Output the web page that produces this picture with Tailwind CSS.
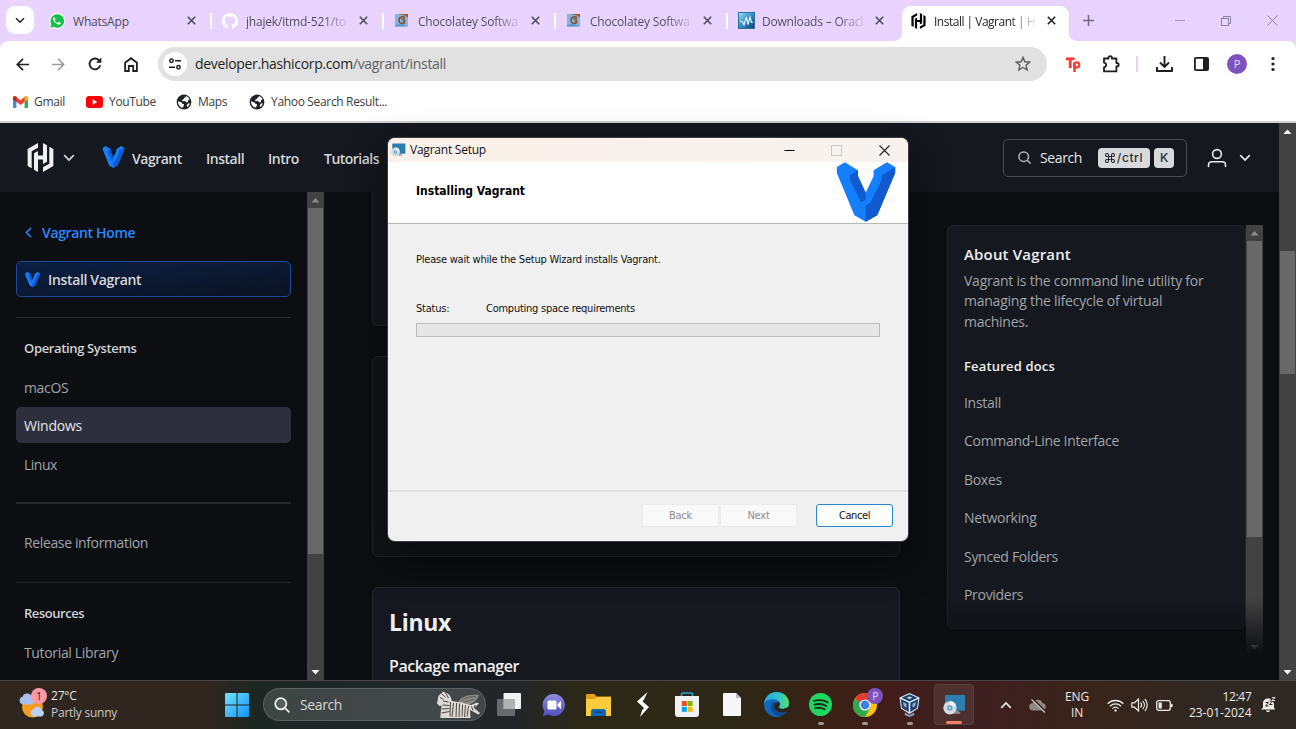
<!DOCTYPE html>
<html lang="en">
<head>
<meta charset="utf-8">
<title>Install | Vagrant | HashiCorp Developer</title>
<script src="https://cdn.jsdelivr.net/npm/@tailwindcss/browser@4"></script>
</head>
<body class="w-[1296px] h-[729px] overflow-hidden bg-[#0d0e12] relative font-['Open_Sans','Noto_Sans',sans-serif] flex flex-col text-[12px]">

<!-- shared symbols -->
<svg class="hidden">
  <symbol id="vagrant" viewBox="590 97 178 181">
    <path fill="#1480ff" d="M591 112 615 98 655 122V140L678 190 702 140V122L742 98 767 112V130L713 258 678 277 644 258 591 130Z"/>
    <path fill="#1159cf" d="M655 122 630 137V150L664 219 678 211V190L655 140ZM767 112 726 137V152L692 220 678 228V277L713 258 767 130Z"/>
  </symbol>
  <symbol id="hashicorp" viewBox="2.2 1 19.6 22">
    <path d="M10.114 1L2.25 5.525v12.95l3.061 1.763V7.29l4.803-2.765V1zM13.886 1v9.5h-3.772V7.05L7.053 8.813v12.42l3.061 1.767v-9.457h3.772v3.407l3.061-1.763V2.768L13.886 1zM13.886 23l7.864-4.525V5.525l-3.061-1.763v12.948l-4.803 2.765V23z"/>
  </symbol>
  <symbol id="close" viewBox="0 0 9 9"><path d="M.8.8l7.4 7.4M8.2.8L.8 8.2" stroke="currentColor" stroke-width="1.6"/></symbol>
  <symbol id="globe" viewBox="0 0 16 16">
    <circle cx="8" cy="8" r="7.4" fill="#202124"/>
    <path fill="#fff" d="M2 7.200l3.200 1.100 1.200 1.500 1.600.4-.3 1.700-1 1.800C3.800 13.200 1.900 10.600 2 7.200zM9.800 2.100c1.800.5 3.200 1.800 3.800 3.400l-1.300.6-.4 1.800-1.700.5-1-1.300-2.700.1-.5-1.300 1.900-1 .2-1.200 1.500-.3zM12.300 9.200l1.500.2c-.4 1.600-1.400 2.900-2.700 3.700l-.4-1.900z"/>
  </symbol>
  <symbol id="choco" viewBox="0 0 14 13">
    <rect x="0" y="0" width="13" height="12.500" fill="#7db7e6"/>
    <path d="M3 0h10v3.500L10 1.500z" fill="#a9501c"/>
    <path d="M10 3.500C7 1.800 3.500 3.500 4 6.800s3.800 3.400 5.500 1.800V7H7.800M6.500 5h3.300" fill="none" stroke="#8e4a22" stroke-width="1.500"/>
    <path d="M0 11l4-1 9 2.500H0z" fill="#559ad2"/>
  </symbol>
  <symbol id="installer" viewBox="0 0 24 21">
    <defs><linearGradient id="scr" x1="0" y1="0" x2="1" y2="1"><stop stop-color="#3fd6e0"/><stop offset="1" stop-color="#1377bd"/></linearGradient></defs>
    <rect x="2" y="0" width="21" height="16.500" rx=".8" fill="#2a7fae"/>
    <rect x="3" y="1" width="19" height="14.500" fill="url(#scr)"/>
    <path d="M12 16.500h4l1 2h-6z" fill="#8b9299"/><path d="M9 18.300h9v1.200H9z" fill="#a9b1b8"/>
    <circle cx="7.200" cy="13.500" r="7" fill="#d5dadd"/><path d="M7.200 6.500a7 7 0 0 1 6.600 4.700l-6.600 2.300z" fill="#f4f6f7"/>
    <circle cx="7.200" cy="13.500" r="2.800" fill="#4e9fdc"/><circle cx="7.200" cy="13.500" r="1.100" fill="#e8f3fa"/>
  </symbol>
  <symbol id="chev" viewBox="0 0 12 8"><path d="M1.200 1.200 6 6 10.800 1.200" fill="none" stroke="currentColor" stroke-width="1.700"/></symbol>
</svg>

<!-- tab strip -->
<div class="h-[41px] shrink-0 bg-[#e8d3ff] flex pl-[6px] text-[#4f4a57] tracking-[-0.2px]">
  <div class="w-7 h-7 mt-[6px] mr-[6px] rounded-[9px] bg-white flex items-center justify-center text-[#1f1f1f]"><svg class="w-[10px] h-[7px]"><use href="#chev"/></svg></div>

  <div class="w-[172px] h-[41px] flex items-center pl-[9px]">
    <svg class="w-4 h-4" viewBox="0 0 24 24"><path fill="#fff" d="M.5 23.700l1.700-6.200A11.800 11.800 0 1 1 6.600 22z"/><path fill="#16c04a" d="M2 22.200l1.500-5.200A10.200 10.200 0 1 1 7 20.700z"/><path fill="#fff" d="M8.400 6.500c-.4-.2-.8-.2-1.200.2-1 1-1.200 2.300-.6 3.800 1.300 3 3.500 5.300 6.600 6.500 1.800.7 3 .4 3.900-.6.5-.6.6-1.300.3-1.600l-2.400-1.200c-.4-.1-.6 0-.8.2l-.9 1.100c-.2.200-.4.2-.7.1-1.700-.8-2.900-1.900-3.800-3.500-.1-.2-.1-.4.1-.6l.7-.9c.1-.2.1-.4 0-.7z"/></svg>
    <span class="ml-2 w-[102px] mt-[2px]">WhatsApp</span>
    <svg class="w-[9px] h-[9px] ml-3"><use href="#close"/></svg>
    <i class="w-[2px] h-4 bg-white ml-[14px]"></i>
  </div>
  <div class="w-[172px] h-[41px] flex items-center pl-[10px]">
    <svg class="w-4 h-4" viewBox="0 0 16 16"><path fill="#fff" d="M8 0C3.580 0 0 3.580 0 8c0 3.540 2.290 6.530 5.470 7.590.4.070.55-.17.55-.38 0-.19-.01-.82-.01-1.490-2.010.37-2.530-.49-2.690-.94-.09-.23-.48-.94-.82-1.130-.28-.15-.68-.52-.01-.53.63-.01 1.080.58 1.230.82.72 1.210 1.870.87 2.330.66.070-.52.280-.87.510-1.070-1.780-.2-3.640-.89-3.640-3.950 0-.87.310-1.590.82-2.150-.08-.2-.36-1.020.08-2.120 0 0 .67-.21 2.200.82.640-.18 1.320-.27 2-.27s1.360.09 2 .27c1.530-1.040 2.200-.82 2.200-.82.440 1.100.16 1.920.08 2.120.51.560.82 1.270.82 2.150 0 3.070-1.870 3.750-3.650 3.950.29.25.54.73.54 1.480 0 1.070-.01 1.930-.01 2.200 0 .21.15.46.55.38A8.010 8.010 0 0 0 16 8c0-4.420-3.580-8-8-8z"/></svg>
    <span class="ml-2 w-[102px] mt-[2px] overflow-hidden whitespace-nowrap bg-linear-to-r from-[#4f4a57] from-75% to-[#4f4a57]/10 bg-clip-text text-transparent">jhajek/itmd-521/to</span>
    <svg class="w-[9px] h-[9px] ml-[11px]"><use href="#close"/></svg>
    <i class="w-[2px] h-4 bg-white ml-[14px]"></i>
  </div>
  <div class="w-[172px] h-[41px] flex items-center pl-[11px]">
    <svg class="w-[14px] h-[13px]"><use href="#choco"/></svg>
    <span class="ml-[9px] w-[102px] mt-[2px] overflow-hidden whitespace-nowrap bg-linear-to-r from-[#4f4a57] from-75% to-[#4f4a57]/10 bg-clip-text text-transparent">Chocolatey Softwa</span>
    <svg class="w-[9px] h-[9px] ml-[11px]"><use href="#close"/></svg>
    <i class="w-[2px] h-4 bg-white ml-[14px]"></i>
  </div>
  <div class="w-[172px] h-[41px] flex items-center pl-[11px]">
    <svg class="w-[14px] h-[13px]"><use href="#choco"/></svg>
    <span class="ml-[9px] w-[102px] mt-[2px] overflow-hidden whitespace-nowrap bg-linear-to-r from-[#4f4a57] from-75% to-[#4f4a57]/10 bg-clip-text text-transparent">Chocolatey Softwa</span>
    <svg class="w-[9px] h-[9px] ml-[11px]"><use href="#close"/></svg>
    <i class="w-[2px] h-4 bg-white ml-[14px]"></i>
  </div>
  <div class="w-[172px] h-[41px] flex items-center pl-[10px]">
    <svg class="w-[17px] h-[17px]" viewBox="0 0 17 17"><defs><linearGradient id="ac" x1="0" y1="0" x2="1" y2="1"><stop stop-color="#9be0f4"/><stop offset=".5" stop-color="#2f8fc4"/><stop offset="1" stop-color="#1a3a7a"/></linearGradient></defs><rect width="17" height="17" fill="#2a72a8"/><rect x="1" y="1" width="15" height="15" fill="url(#ac)"/><path d="M2 9.500h2.500L6 13l2.500-8L10 12.500 12 5l1.500 5.500H15" fill="none" stroke="#e9fbff" stroke-width="1.100"/></svg>
    <span class="ml-[7px] w-[102px] mt-[2px] overflow-hidden whitespace-nowrap bg-linear-to-r from-[#4f4a57] from-75% to-[#4f4a57]/10 bg-clip-text text-transparent">Downloads – Oracl</span>
    <svg class="w-[9px] h-[9px] ml-[11px]"><use href="#close"/></svg>
  </div>
  <div class="relative ml-[2px] mt-[6px] w-[167px] h-[35px] rounded-t-[9px] bg-white flex items-center pl-[9px] pb-[6px] text-[#1f1f1f]">
    <svg class="absolute -left-2 bottom-0 w-2 h-2" viewBox="0 0 8 8"><path fill="#fff" d="M8 0v8H0a8 8 0 0 0 8-8z"/></svg>
    <svg class="absolute -right-2 bottom-0 w-2 h-2" viewBox="0 0 8 8"><path fill="#fff" d="M0 0v8h8a8 8 0 0 1-8-8z"/></svg>
    <svg class="w-[15px] h-4"><use href="#hashicorp"/></svg>
    <span class="ml-2 w-[101px] mt-[2px] tracking-[-0.5px] overflow-hidden whitespace-nowrap bg-linear-to-r from-[#1f1f1f] from-75% to-[#1f1f1f]/10 bg-clip-text text-transparent">Install | Vagrant | H</span>
    <svg class="w-[9px] h-[9px] ml-3"><use href="#close"/></svg>
  </div>
  <div class="flex items-center h-[41px] text-[#8d8299]">
    <svg class="w-[11px] h-[11px] ml-[14px]" viewBox="0 0 11 11"><path d="M5.500 0v11M0 5.500h11" stroke="#75697f" stroke-width="1.500"/></svg>
    <svg class="w-[10px] h-[11px] ml-[81px]" viewBox="0 0 10 11"><path d="M0 5.500h10" stroke="#a497b3"/></svg>
    <svg class="w-[10px] h-[10px] ml-[36px]" viewBox="0 0 10 10" fill="none" stroke="#8d8299"><rect x=".5" y="2.500" width="7" height="7"/><path d="M2.500 2.500V.5H9.500v7H7.500"/></svg>
    <svg class="w-[11px] h-[11px] ml-[36px]" viewBox="0 0 11 11"><path d="M.5.5l10 10M10.500.5l-10 10" stroke="#8d8299"/></svg>
  </div>
</div>

<!-- toolbar -->
<div class="bg-[#e8d3ff] shrink-0">
<div class="h-[46px] bg-white rounded-t-[8px] flex items-center text-[#1f1f1f]">
  <svg class="w-[13px] h-[13px] ml-4" viewBox="0 0 13 13"><path d="M7 .8L1.300 6.500 7 12.200M1.300 6.500H13" fill="none" stroke="#1f1f1f" stroke-width="1.700"/></svg>
  <svg class="w-[13px] h-[13px] ml-[23px]" viewBox="0 0 13 13"><path d="M6 .8l5.700 5.700L6 12.200M11.700 6.500H0" fill="none" stroke="#9b9b9b" stroke-width="1.600"/></svg>
  <svg class="w-[14px] h-[14px] ml-[23px]" viewBox="0 0 14 14"><path d="M12.200 8.300A5.400 5.400 0 1 1 11 3.300L12.600 5" fill="none" stroke="#1f1f1f" stroke-width="1.800"/><path d="M13.300.6v5.200H8z" fill="#1f1f1f"/></svg>
  <svg class="w-[14px] h-[15px] ml-[22px]" viewBox="0 0 14 15"><path d="M1.100 5.700 7 1.200l5.900 4.500v8.300H9.200V9H4.800v5H1.100z" fill="none" stroke="#1f1f1f" stroke-width="1.800"/></svg>
  <div class="ml-[20px] w-[889px] h-[34px] rounded-full bg-[#e1e1e1] flex items-center pl-[5px] pr-[16px]">
    <span class="w-6 h-6 rounded-full bg-white flex items-center justify-center"><svg class="w-3 h-3" viewBox="0 0 12 12" fill="none" stroke="#1f1f1f" stroke-width="1.500"><circle cx="2.500" cy="2.800" r="1.700"/><path d="M6 2.800h6M0 9.200h6"/><circle cx="9.500" cy="9.200" r="1.700"/></svg></span>
    <span class="ml-2 text-[14px] tracking-[-0.33px] text-[#5f6063] pb-px"><span class="text-[#1f1f1f]">developer.hashicorp.com</span>/vagrant/install</span>
    <svg class="w-4 h-4 ml-auto" viewBox="0 0 16 16"><path d="M8 1.400l1.900 4.400 4.800.4-3.600 3.100 1.100 4.700L8 11.500 3.800 14l1.100-4.700L1.300 6.200l4.800-.4z" fill="none" stroke="#5a5c60" stroke-width="1.400"/></svg>
  </div>
  <svg class="w-[15px] h-[15px] ml-[19px]" viewBox="0 0 15 15" fill="none" stroke="#fb3b33"><path d="M0 1.800h8.500" stroke-width="2.800"/><path d="M4.200 1.500v9.500" stroke-width="2.900"/><path d="M8.500 5.500V15" stroke-width="2.600"/><circle cx="10.700" cy="7.900" r="2.500" stroke-width="2.300"/></svg>
  <svg class="w-[18px] h-[18px] ml-[21px]" viewBox="0 0 18 18"><path d="M2 3.500h4.500V2.800a1.700 1.700 0 0 1 3.400 0v.7H14.400V8h.6a1.700 1.700 0 0 1 0 3.400h-.6v5H2v-4.100c2.800-.6 2.800-4 0-4.600z" fill="none" stroke="#1f1f1f" stroke-width="1.800" stroke-linejoin="round"/></svg>
  <i class="w-[2px] h-4 ml-[16px] bg-[#e8d3ff]"></i>
  <svg class="w-[17px] h-[16px] ml-[18px]" viewBox="0 0 17 16"><path d="M8.500 0v10.500M4 6.500l4.500 4.500L13 6.500M1 11v4h15v-4" fill="none" stroke="#1f1f1f" stroke-width="1.900"/></svg>
  <svg class="w-[15px] h-[14px] ml-[21px]" viewBox="0 0 15 14"><rect x=".9" y=".9" width="13.200" height="12.200" rx="1" fill="none" stroke="#1f1f1f" stroke-width="1.800"/><path d="M9 1h5v12H9z" fill="#1f1f1f"/></svg>
  <span class="w-5 h-5 ml-[18px] rounded-full bg-[#7c52bf] text-[#e9def7] text-[11px] leading-5 text-center">P</span>
  <svg class="w-[4px] h-4 ml-[24px]" viewBox="0 0 4 16" fill="#1f1f1f"><circle cx="2" cy="2.500" r="1.600"/><circle cx="2" cy="8" r="1.600"/><circle cx="2" cy="13.500" r="1.600"/></svg>
</div>
</div>

<!-- bookmarks -->
<div class="h-[36px] shrink-0 bg-white border-b-2 border-[#cfd0d2] flex items-center pb-[5px] text-[#3c3d40] tracking-[-0.33px]">
  <svg class="w-[15px] h-[12px] ml-[13px]" viewBox="0 0 15 12"><path fill="#4285f4" d="M0 2.500l3.400 2V12H1a1 1 0 0 1-1-1z"/><path fill="#34a853" d="M15 2.500l-3.400 2V12H14a1 1 0 0 0 1-1z"/><path fill="#ea4335" d="M0 1.800C0 .3 1.800-.2 3 .6l4.500 3.600L12 .6c1.200-.8 3-.3 3 1.200v1.400L7.500 9 0 3.200z"/><path fill="#fbbc04" d="M11.600 1l.5-.4c1.200-.8 2.900-.3 2.900 1.200v1.600l-3.400 2.400z"/><path fill="#c5221f" d="M0 1.800C0 .3 1.800-.2 3 .6l.4.4v4.800L0 3.200z"/></svg>
  <span class="ml-[6px] w-[31px]">Gmail</span>
  <svg class="w-[17px] h-[12px] ml-[21px]" viewBox="0 0 17 12"><rect width="17" height="12" rx="3" fill="#f00"/><path d="M6.700 3.300v5.400L11.300 6z" fill="#fff"/></svg>
  <span class="ml-[6px] w-[47px]">YouTube</span>
  <svg class="w-4 h-4 ml-5"><use href="#globe"/></svg>
  <span class="ml-[6px] w-[30px]">Maps</span>
  <svg class="w-4 h-4 ml-[21px]"><use href="#globe"/></svg>
  <span class="ml-[6px] whitespace-nowrap">Yahoo Search Result...</span>
</div>

<!-- page viewport -->
<div class="h-[557px] shrink-0 flex">
  <div class="w-[1279px] flex flex-col">
    <header class="h-[69px] shrink-0 bg-[#15181e] flex items-center text-[14px] font-semibold tracking-[-0.48px] text-[#d5d7db]">
      <svg class="w-[27px] h-[29px] ml-[27px] text-[#f0f0f2] fill-current"><use href="#hashicorp"/></svg>
      <svg class="w-[12px] h-[8px] ml-[9px]"><use href="#chev"/></svg>
      <svg class="w-[23px] h-[22px] ml-[27px] mb-[2px]"><use href="#vagrant"/></svg>
      <span class="ml-[7px] w-[74px] pt-px">Vagrant</span>
      <span class="w-[62px] pt-px">Install</span>
      <span class="w-[56px] pt-px">Intro</span>
      <span class="tracking-[-0.52px] pt-px">Tutorials</span>
      <div class="ml-auto w-[184px] h-[38px] border border-[#4a4d57] rounded-[5px] flex items-center pl-[14px] font-normal">
        <svg class="w-[13px] h-[13px]" viewBox="0 0 13 13" fill="none" stroke="#b2b6bd" stroke-width="1.500"><circle cx="5.700" cy="5.700" r="4.800"/><path d="M9.300 9.300l3.300 3.300"/></svg>
        <span class="ml-[9px] w-[58px] tracking-[-0.39px] text-[#e4e6ea]">Search</span>
        <span class="w-[52px] h-5 rounded-[4px] bg-[#d8d9dd] text-[#2b2d33] font-['Inter'] font-medium text-[12px] tracking-[0.6px] flex items-center justify-center gap-[2px]">
          <svg class="w-[10px] h-[10px]" viewBox="0 0 10 10" fill="none" stroke="#2b2d33" stroke-width="1.100"><path d="M3.500 3.500h3v3h-3zM3.500 3.500H2A1.500 1.500 0 1 1 3.500 2zM6.500 3.500V2A1.500 1.500 0 1 1 8 3.500zM6.500 6.500H8A1.500 1.500 0 1 1 6.500 8zM3.500 6.500V8A1.500 1.500 0 1 1 2 6.500z"/></svg>/ctrl</span>
        <span class="ml-1 w-5 h-5 rounded-[4px] bg-[#d8d9dd] text-[#2b2d33] font-['Inter'] font-medium text-[12px] tracking-normal leading-5 text-center">K</span>
      </div>
      <svg class="w-[20px] h-[20px] ml-[20px]" viewBox="0 0 20 20" fill="none" stroke="#e8e9ec" stroke-width="1.600" stroke-linecap="round"><circle cx="10" cy="6" r="4.400"/><path d="M1.500 18.500v-1.500c0-2 1.500-3.300 3.300-3.300h10.400c1.800 0 3.300 1.300 3.300 3.300v1.500"/></svg>
      <svg class="w-[12px] h-[8px] ml-[12px] mr-[28px] text-[#e8e9ec]"><use href="#chev"/></svg>
    </header>

    <div class="h-[488px] flex overflow-hidden text-[14px] text-[#a0a4ab] tracking-[-0.34px]">
      <nav class="w-[307px] pl-4 pr-4 flex flex-col whitespace-nowrap">
        <a class="mt-[30px] h-5 pl-[9px] flex items-center font-semibold text-[#2b89ff]"><svg class="w-[7px] h-[11px] mr-[10px]" viewBox="0 0 7 11"><path d="M6 1L1.300 5.500 6 10" fill="none" stroke="#2b89ff" stroke-width="1.500"/></svg>Vagrant Home</a>
        <a class="mt-[19px] h-9 pl-2 flex items-center rounded-[5px] border border-[#1c4a99] bg-linear-to-br from-[#0a1f44] to-[#0c1322] font-semibold text-[#d5d7db]"><svg class="w-[15px] h-[15px] mr-[8px]"><use href="#vagrant"/></svg>Install Vagrant</a>
        <i class="mt-[20px] h-px shrink-0 bg-[#2b2d32]"></i>
        <b class="mt-[20px] h-5 pl-2 text-[13px] leading-5 font-semibold text-[#d0d2d6] tracking-[-0.35px]">Operating Systems</b>
        <a class="mt-3 h-9 pl-2 leading-9">macOS</a>
        <a class="mt-px h-9 pl-2 leading-[38px] rounded-[5px] bg-[#2d303c] font-medium text-[#e4e5e9] tracking-[-0.22px]">Windows</a>
        <a class="mt-[3px] h-9 pl-2 leading-[38px] tracking-[-0.5px]">Linux</a>
        <i class="mt-[20px] h-[2px] shrink-0 bg-[#26282d]"></i>
        <a class="mt-[21px] h-9 pl-2 leading-9 tracking-[-0.37px]">Release information</a>
        <i class="mt-[21px] h-px shrink-0 bg-[#222429]"></i>
        <b class="mt-[20px] h-5 pl-2 text-[13px] leading-5 font-semibold text-[#d0d2d6] tracking-[-0.45px]">Resources</b>
        <a class="mt-3 h-9 pl-2 leading-9">Tutorial Library</a>
      </nav>
      <div class="w-[17px] bg-[#424242] flex flex-col items-center">
        <svg class="w-[9px] h-[16px]" viewBox="0 0 9 16"><path d="M4.500 6L8.500 10.500h-8z" fill="#8b8b8b"/></svg>
        <i class="w-[15px] h-[346px] bg-[#686868]"></i>
        <svg class="w-[9px] h-[16px] mt-auto" viewBox="0 0 9 16"><path d="M4.500 10.500L.5 6h8z" fill="#fff"/></svg>
      </div>
      <main class="ml-[48px] w-[528px] flex flex-col text-[#efeff1]">
        <section class="h-[134px] shrink-0 border border-t-0 border-[#24262c] rounded-b-[6px] bg-[#15181e]"></section>
        <section class="mt-[30px] h-[201px] shrink-0 border border-[#24262c] rounded-[6px] bg-[#13151a]"></section>
        <section class="mt-[30px] h-[110px] shrink-0 border border-[#24262c] rounded-[6px] bg-[#15181e] pl-4">
          <h2 class="mt-[18px] text-[23px] leading-[32px] font-bold tracking-[-0.3px]">Linux</h2>
          <h3 class="mt-[18px] text-[16px] leading-5 font-semibold tracking-[-0.45px]">Package manager</h3>
        </section>
      </main>
      <aside class="relative ml-[47px] mt-[33px] h-[430px] flex">
        <div class="w-[299px] h-[404px] border border-[#24262c] rounded-[6px] bg-[#15181e] pl-4 pt-[19px] flex flex-col">
          <b class="h-5 text-[15px] leading-5 font-semibold text-[#efeff1] tracking-[0.17px] -mt-px mb-px">About Vagrant</b>
          <p class="mt-[6px] w-[260px] leading-[20.300px] tracking-[-0.24px]">Vagrant is the command line utility for<br>managing the lifecycle of virtual<br>machines.</p>
          <b class="mt-6 h-5 text-[13px] leading-5 font-semibold text-[#efeff1] tracking-[0.17px]">Featured docs</b>
          <div class="mt-2 flex flex-col leading-[38.400px] tracking-[-0.3px]">
            <a>Install</a><a>Command-Line Interface</a><a>Boxes</a><a>Networking</a><a>Synced Folders</a><a>Providers</a>
          </div>
        </div>
        <div class="w-[17px] bg-[#424242] flex flex-col items-center">
          <svg class="w-[9px] h-[16px] shrink-0" viewBox="0 0 9 16"><path d="M4.500 6L8.500 10.500h-8z" fill="#8b8b8b"/></svg>
          <i class="w-[15px] h-[296px] bg-[#686868]"></i>
          <svg class="w-[9px] h-[16px] mt-auto" viewBox="0 0 9 16"><path d="M4.500 10.500L.5 6h8z" fill="#fff"/></svg>
        </div>
        <div class="absolute inset-x-0 bottom-0 h-[58px] bg-linear-to-b from-[#0d0e12]/0 to-[#0d0e12]"></div>
      </aside>
    </div>
  </div>
  <div class="w-[17px] bg-[#424242] flex flex-col items-center">
    <svg class="w-[9px] h-[16px]" viewBox="0 0 9 16"><path d="M4.500 6.500L8.500 11h-8z" fill="#fff"/></svg>
    <i class="mt-[112px] w-[15px] h-[123px] bg-[#686868]"></i>
    <svg class="w-[9px] h-[16px] mt-auto" viewBox="0 0 9 16"><path d="M4.500 10.500L.5 6h8z" fill="#fff"/></svg>
  </div>
</div>

<!-- setup wizard window -->
<div class="absolute left-[388px] top-[138px] w-[520px] h-[403px] rounded-[7px] overflow-hidden bg-[#f0f0f0] shadow-[0_0_0_1px_#3b3d40,0_16px_36px_6px_rgba(0,0,0,0.45)] flex flex-col font-['DejaVu_Sans_Condensed','Open_Sans',sans-serif] text-[11px] tracking-[-0.22px] text-[#111]">
  <div class="h-6 shrink-0 bg-linear-to-r from-[#fbf0ea] to-[#f7f2ee] flex items-center pl-[3px] font-['Open_Sans'] text-[12px] tracking-[-0.23px]">
    <svg class="w-[15px] h-[14px]"><use href="#installer"/></svg>
    <span class="ml-[4px]">Vagrant Setup</span>
    <svg class="w-[11px] h-[11px] ml-auto" viewBox="0 0 11 11"><path d="M.5 5.500h10" stroke="#000"/></svg>
    <svg class="w-[11px] h-[11px] ml-[36px]" viewBox="0 0 11 11"><rect x=".5" y=".5" width="10" height="10" fill="none" stroke="#cfc9c4"/></svg>
    <svg class="w-[11px] h-[11px] ml-[37px] mr-[18px]" viewBox="0 0 11 11"><path d="M.5.5l10 10M10.500.5l-10 10" stroke="#222" stroke-width="1.100"/></svg>
  </div>
  <div class="h-[62px] shrink-0 bg-white border-b border-[#b9b9b9] flex justify-between pl-7 pr-[12px]">
    <b class="mt-[19px] text-[12px] leading-5 tracking-[0px] text-black">Installing Vagrant</b>
    <svg class="w-[60px] h-[60px]"><use href="#vagrant"/></svg>
  </div>
  <div class="h-[268px] shrink-0 px-7 border-b-2 border-[#dfdfdf]">
    <p class="mt-[26px] leading-5">Please wait while the Setup Wizard installs Vagrant.</p>
    <p class="mt-[29px] leading-5 flex"><span class="w-[70px]">Status:</span><span class="tracking-[-0.25px]">Computing space requirements</span></p>
    <div class="mt-[4px] h-[14px] border border-[#bcbcbc] bg-[#e6e6e6]"></div>
  </div>
  <div class="flex justify-end pt-3 pr-[15px] leading-[21px] text-center text-[#8f8f8f]">
    <span class="w-[77px] h-[23px] border border-[#ebebeb] rounded-[2px] bg-[#f9f9f9]">Back</span>
    <span class="ml-[1px] w-[77px] h-[23px] border border-[#ebebeb] rounded-[2px] bg-[#f9f9f9]">Next</span>
    <span class="ml-[19px] w-[77px] h-[23px] border border-[#2a86cf] rounded-[3px] bg-[#fdfdfd] text-[#111] tracking-[-0.4px]">Cancel</span>
  </div>
</div>

<!-- taskbar -->
<div class="h-[49px] shrink-0 border-t border-[#4a4846] bg-linear-[90deg,#2f2620_0%,#2e261f_16%,#1c2622_20%,#22272b_34%,#232628_40%,#2c2818_45%,#2d2716_57%,#3a2115_64%,#401d19_68%,#3e1f20_76%,#38241a_84%,#302721_92%,#2d2824_100%] flex items-center text-[#ece9e6]">
  <div class="relative w-[27px] h-[28px] ml-[18px] mb-[3px]">
    <svg class="w-[27px] h-[28px]" viewBox="0 0 27 28"><circle cx="14.500" cy="17" r="10.500" fill="#f79a1d"/><path d="M5 14.500a4 4 0 0 1-.5-7.800 5 5 0 0 1 9.400.3c3 .4 3.600 6 .1 7.500z" fill="#a9bfee"/><path d="M15.500 26.500a3.600 3.600 0 0 1-.4-7 4.600 4.600 0 0 1 8.600.6c3 .6 3 5.800-.2 6.400z" fill="#bcd3f8"/></svg>
    <span class="absolute left-[13px] -top-[2px] w-4 h-4 rounded-full bg-[#ff98a4] text-[#3a2024] text-[10.500px] leading-4 text-center">1</span>
  </div>
  <div class="ml-[6px] w-[174px] leading-[17px] tracking-[-0.2px] -mt-[2px]">27°C<br><span class="text-[#cdc8c4] tracking-[-0.25px]">Partly sunny</span></div>
  <svg class="w-6 h-6" viewBox="0 0 24 24"><defs><linearGradient id="win" x1="0" y1="0" x2="1" y2="1"><stop stop-color="#74e3fb"/><stop offset="1" stop-color="#0f93f8"/></linearGradient></defs><path fill="url(#win)" d="M1 0h10.500v11.500H0V1a1 1 0 0 1 1-1zM12.500 0H23a1 1 0 0 1 1 1v10.500H12.500zM0 12.500h11.500V24H1a1 1 0 0 1-1-1zM12.500 12.500H24V23a1 1 0 0 1-1 1H12.500z"/></svg>
  <div class="ml-[14px] mb-px w-[223px] h-[33px] rounded-full bg-white/15 border border-white/15 flex items-center pl-[10px] pr-[4px] text-[14px] tracking-[-0.39px] text-[#d6d6d4]">
    <svg class="w-[16px] h-[16px]" viewBox="0 0 16 16" fill="none" stroke="#eee" stroke-width="1.800"><circle cx="6.800" cy="6.800" r="5.600" fill="#ffffff22"/><path d="M10.800 10.800l4.500 4.500"/></svg>
    <span class="ml-[10px]">Search</span>
    <svg class="w-[44px] h-[27px] ml-auto" viewBox="0 0 44 27">
      <path d="M21 12C23 6 30 3 42 4c-2 6-7 10-15 10z" fill="#8d8a85"/><path d="M24 10c4-3.500 9-4.500 15-4.500M26 12c4-2 7-3 11-3.500" stroke="#5b5854" stroke-width=".9" fill="none"/>
      <path d="M1 7.500C1 5 3 2.500 5 2.500L5.500.5 8 1.500c4 .8 6 4 7 8.500 4 1 8 .5 13 2.500l6 1.500 6-2.500 2 1-5 4.500 6 5-1.500 1.500-8.500-4.500.5 8H3.500c-.5-4 1-8 1-12.500L2.500 15 0 12.500z" fill="#dedbd6"/>
      <path d="M5 3l3.500 3.500M8.500 2l3 5M3 6.500l3.500 2M6 10l5.500 1M5.500 14l7 .5M5 18l7.500-.5M4.500 22l8-1.500M13.500 11l-.5 14.500M16.500 12l-1.500 14M19.500 12l-.5 14M22.500 12.500l-.5 13.500M25.500 13.500l-.5 12M28.500 14l-1 12M31.500 15l-1.500 10.500M34.500 15.500l1.500 4M38 14l-1 3" stroke="#4c4844" stroke-width="1" fill="none"/>
    </svg>
  </div>
  <div class="ml-[1px] mr-[1px] mb-px grid grid-cols-11 w-[489.500px] h-full items-center justify-items-center">
    <svg class="w-6 h-[23px]" viewBox="0 0 24 23"><rect x="6.500" y="0" width="17.500" height="16" rx="1" fill="#f1f1f1"/><rect x="0" y="6" width="18" height="17" rx="1" fill="#777a7c" fill-opacity=".82"/><path d="M6.500 6H18v10H6.500z" fill="#b1b2b4"/></svg>
    <svg class="w-6 h-6" viewBox="0 0 24 24"><defs><linearGradient id="chat" x1="0" y1="0" x2="0" y2="1"><stop stop-color="#8e8ed8"/><stop offset="1" stop-color="#5350c0"/></linearGradient></defs><path d="M12 1a11 11 0 1 1-5.500 20.600L1 23l1.400-5A11 11 0 0 1 12 1z" fill="url(#chat)"/><rect x="5.500" y="7.500" width="9" height="9" rx="1.500" fill="#fff"/><path d="M15.500 11l3.500-3v8l-3.500-3z" fill="#fff"/></svg>
    <svg class="w-[25px] h-[22px]" viewBox="0 0 25 22"><path d="M0 1a1 1 0 0 1 1-1h7.500l2 2.500H25V6H0z" fill="#e2a10e"/><path d="M0 5h9l2-2h14v19H0z" fill="#fccb3e"/><path d="M5 22v-4.500a2.500 2.500 0 0 1 2.500-2.500h10a2.500 2.500 0 0 1 2.500 2.500V22z" fill="#1069b5"/><path d="M8.500 18.200h8" stroke="#0b3f76" stroke-width="1.200"/></svg>
    <svg class="w-3 h-[25px]" viewBox="0 0 12 25"><path d="M10.500 0L7 7.500l-1.500 2L12 15 3 25l2-6.500L7 16 0 9.500z" fill="#fff"/></svg>
    <svg class="w-6 h-[25px]" viewBox="0 0 24 25"><path d="M6.500 5V2.200A1.200 1.200 0 0 1 7.700 1h8.600a1.200 1.200 0 0 1 1.200 1.200V5" fill="none" stroke="#2ba3dd" stroke-width="1.600"/><path d="M0 4h24v18a3 3 0 0 1-3 3H3a3 3 0 0 1-3-3z" fill="#f1f1f1"/><path d="M6.800 9h5v5h-5z" fill="#f25022"/><path d="M12.600 9h5v5h-5z" fill="#7fba00"/><path d="M6.800 14.800h5v5h-5z" fill="#00a4ef"/><path d="M12.600 14.800h5v5h-5z" fill="#ffb900"/></svg>
    <svg class="w-[18px] h-[23px]" viewBox="0 0 18 23"><path d="M0 1a1 1 0 0 1 1-1h12l5 5v17a1 1 0 0 1-1 1H1a1 1 0 0 1-1-1z" fill="#f7f7f7"/><path d="M13 0v5h5z" fill="#b9b9b9"/></svg>
    <svg class="w-[25px] h-[25px]" viewBox="0 0 24 24"><defs><linearGradient id="e1" x1="0" y1="0" x2="1" y2="0"><stop stop-color="#2aa5e0"/><stop offset=".6" stop-color="#2fc4c8"/><stop offset="1" stop-color="#5fdc5a"/></linearGradient></defs><circle cx="12" cy="12" r="12" fill="#1368bd"/><path d="M0 11.500C.5 5 5.500 0 12 0c7 0 12 5 12 10.500 0 3.500-2.500 5.700-5.700 5.700-2.300 0-4-.8-4-1.900 0-.7 1-1.200 1-2.700C15.300 9 12.500 7 9 7 4.500 7 1 9 0 11.500z" fill="url(#e1)"/><path d="M9 9.500c-4 3-3 10.500 3.500 13.200 4 1 8-1 9.800-4.200-5 2.500-12.500 1-12.500-5 0-1.500.8-3 2.200-3.800z" fill="#0a4a94"/><path d="M9.800 13.500c0 5.500 7 7.500 12 5.200.8-.3 1-.1.6.5L24 20v-5.500l-5.700 1.700c-2.300 0-4-.8-4-1.900 0-.7 1-1.200 1-2.700 0-1-.6-1.800-1.500-2-2.500.2-4 2-4 3.900z" fill="#2e2315"/></svg>
    <div class="relative h-full flex items-center"><svg class="w-[23px] h-[23px]" viewBox="0 0 24 24"><circle cx="12" cy="12" r="12" fill="#1ed760"/><path d="M5 8.300c5-1.400 10.500-1 14.500 1.400M5.700 12.200c4.200-1.200 8.800-.8 12.300 1.300M6.400 15.900c3.500-.9 7-.6 10 1.100" fill="none" stroke="#182a18" stroke-width="1.900" stroke-linecap="round"/></svg><i class="absolute left-[9px] bottom-[4px] w-[6px] h-[3px] rounded-full bg-[#a09793]"></i></div>
    <div class="relative h-full flex items-center"><svg class="w-[24px] h-[24px]" viewBox="0 0 24 24"><circle cx="12" cy="12" r="12" fill="#fbc116"/><path d="M12 12L1.600 6A12 12 0 0 1 22.400 6z" fill="#e33b2e"/><path d="M1.600 6A12 12 0 0 0 12 24l5.200-9L12 12z" fill="#2da94f"/><path d="M12 6.500h10.700L22.400 6 12 0z" fill="#e33b2e"/><circle cx="12" cy="12" r="5.600" fill="#fff"/><circle cx="12" cy="12" r="4.400" fill="#3b7de9"/></svg><span class="absolute left-[14px] top-[7px] w-4 h-4 rounded-full bg-[#7c52bf] text-[#e3d6f5] text-[10px] leading-4 text-center">P</span><i class="absolute left-[9px] bottom-[4px] w-[6px] h-[3px] rounded-full bg-[#a09793]"></i></div>
    <div class="relative h-full flex items-center"><svg class="w-[21px] h-[24px]" viewBox="0 0 21 24"><path d="M10.500 0L20.500 4.500 19 15.500 10.500 21 2 15.500.5 4.500z" fill="#dbe7f2"/><path d="M10.500 1.200L18.500 4.700l-8 3.700-8-3.700zM1.700 6l8 3.700v9.400L3 14.900zM19.300 6l-8 3.700v9.400l6.700-4.200z" fill="#1d3f6b"/><path d="M4 9l3.500 1.800v4L4.800 13zM17 9l-3.500 1.800v4l2.700-1.800z" fill="#8fb0d3"/><path d="M6 19.500l4.500 2.500 4.500-2.500.5 2.500-5 2-5-2z" fill="#7f9cc0"/><path d="M7.500 4.800l3-1.300 3 1.300-3 1.300z" fill="#cfe0ef"/></svg><i class="absolute left-[8px] bottom-[4px] w-[6px] h-[3px] rounded-full bg-[#a09793]"></i></div>
    <div class="relative w-10 h-[41px] rounded-[4px] bg-white/8 border border-white/8 flex items-center justify-center"><svg class="w-[23px] h-[20px]"><use href="#installer"/></svg><i class="absolute left-[11px] bottom-0 w-4 h-[3px] rounded-full bg-[#f4806a]"></i></div>
  </div>
  <svg class="w-[12px] h-[8px] ml-[22px] rotate-180"><use href="#chev"/></svg>
  <svg class="w-[18px] h-[15px] ml-[17px]" viewBox="0 0 18 15"><path d="M4 12.500a3.600 3.600 0 0 1-.3-7.200 5.200 5.200 0 0 1 9.700-.4 3.900 3.900 0 0 1 .6 7.600z" fill="#8f8883"/><path d="M3 1l13.500 13" stroke="#2a1d15" stroke-width="2.500"/><path d="M2.500 1.500L16 14.500" stroke="#d8d4d0" stroke-width="1.100"/></svg>
  <div class="ml-[17px] w-[27px] text-center leading-[16px] tracking-[-0.15px]">ENG<br>IN</div>
  <svg class="w-[17px] h-[13px] ml-[16px]" viewBox="0 0 17 13" fill="none" stroke="#ece9e6" stroke-width="1.300"><path d="M.6 4.700c4.400-4.300 11.400-4.300 15.800 0M3 7.200c3.100-3 7.900-3 11 0M5.400 9.600c1.800-1.700 4.400-1.700 6.200 0"/><circle cx="8.500" cy="11.500" r=".9" fill="#ece9e6" stroke-width=".6"/></svg>
  <svg class="w-[17px] h-[14px] ml-[7px]" viewBox="0 0 17 14" fill="none" stroke="#ece9e6" stroke-width="1.200"><path d="M.8 4.800h2.700L7.500 1v12L3.500 9.200H.8zM9.500 4.500c1.300 1.400 1.300 3.600 0 5M11.700 2.800c2.200 2.400 2.200 6 0 8.400M13.900 1c3.100 3.400 3.100 8.600 0 12"/></svg>
  <svg class="w-[17px] h-[11px] ml-[8px]" viewBox="0 0 17 11"><rect x=".7" y=".7" width="13.600" height="9.600" rx="2" fill="none" stroke="#ece9e6" stroke-width="1.300"/><rect x="2.500" y="2.500" width="3.300" height="6" fill="#ece9e6"/><path d="M15 3.700l1.700.5v2.600l-1.700.5z" fill="#ece9e6"/></svg>
  <div class="ml-[12px] w-[67px] text-right leading-[16px]"><span class="tracking-[-0.3px]">12:47</span><br>23-01-2024</div>
  <svg class="w-[15px] h-[16px] ml-[9px]" viewBox="0 0 15 16"><path d="M2 6.500C2 3.500 4 1.500 7 1.500h2l4 5v4l1 2H0l2-2zM5 13.500h4c-.3 2-3.700 2-4 0z" fill="#f0edea"/><path d="M4.500 5.500h3L4.500 9h3M8.500 4h3l-3 3.500h3" fill="none" stroke="#302721" stroke-width="1"/><path d="M11 .6h3l-3 3h3" fill="none" stroke="#f0edea" stroke-width="1"/></svg>
</div>
</body>
</html>
